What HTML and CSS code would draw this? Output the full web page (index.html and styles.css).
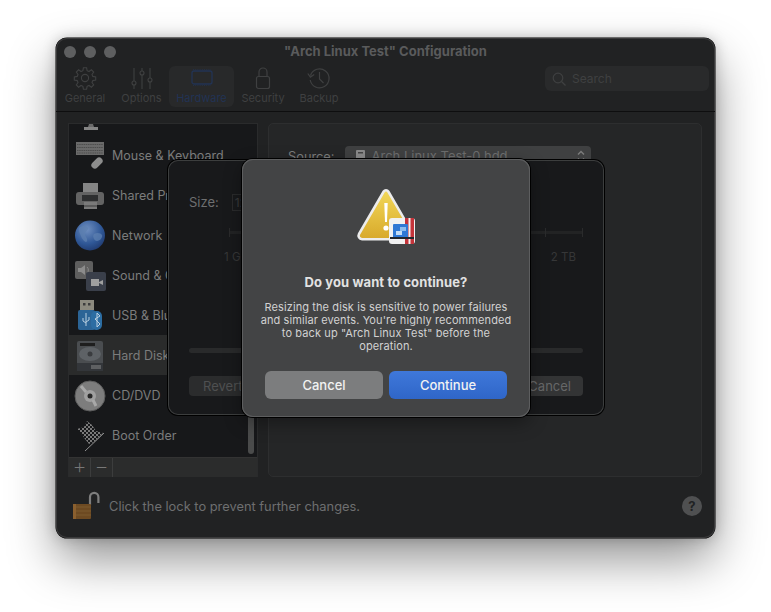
FILE: index.html
```html
<!DOCTYPE html>
<html lang="en">
<head>
<meta charset="utf-8">
<title>Arch Linux Test Configuration</title>
<link rel="stylesheet" href="styles.css">
</head>
<body>
<div class="window">
  <header class="header">
    <div class="titlebar">
      <div class="lights"><i></i><i></i><i></i></div>
      <div class="title">"Arch Linux Test" Configuration</div>
    </div>
    <div class="toolbar">
      <div class="tabs">
        <div class="tab tab-general">
          <svg width="24" height="24" viewBox="0 0 24 24" fill="none" stroke="currentColor" stroke-width="1.1"><circle cx="12" cy="12" r="3.6"/><path d="M10.4 1.8h3.200l.5 2.900 1.900.8 2.400-1.700 2.300 2.300-1.700 2.400.8 1.900 2.900.5v3.200l-2.900.5-.8 1.900 1.700 2.400-2.300 2.300-2.400-1.700-1.900.8-.5 2.900h-3.200l-.5-2.900-1.900-.8-2.400 1.700-2.300-2.300 1.700-2.400-.8-1.900-2.900-.5v-3.200l2.900-.5.8-1.900-1.700-2.400 2.300-2.300 2.400 1.700 1.900-.8z"/></svg>
          <span>General</span>
        </div>
        <div class="tab tab-options">
          <svg width="24" height="24" viewBox="0 0 24 24" fill="none" stroke="currentColor" stroke-width="1.1"><path d="M4 2v13M4 19v4M12 2v3M12 9v14M20 2v10M20 16v7"/><circle cx="4" cy="17" r="2"/><circle cx="12" cy="7" r="2"/><circle cx="20" cy="14" r="2"/></svg>
          <span>Options</span>
        </div>
        <div class="tab tab-hardware">
          <svg width="24" height="24" viewBox="0 0 24 24" fill="none" stroke="currentColor" stroke-width="1.3"><rect x="2" y="5" width="20" height="13" rx="2"/><path stroke-width=".8" stroke-dasharray="1 1.2" d="M3 3.700h18M3 19.400h18"/></svg>
          <span>Hardware</span>
        </div>
        <div class="tab tab-security">
          <svg width="24" height="24" viewBox="0 0 24 24" fill="none" stroke="currentColor" stroke-width="1.2"><rect x="5.500" y="10.500" width="13" height="12" rx="2"/><path d="M8 10.500V6a4 4 0 0 1 8 0v4.500"/></svg>
          <span>Security</span>
        </div>
        <div class="tab tab-backup">
          <svg width="24" height="24" viewBox="0 0 24 24" fill="none" stroke="currentColor" stroke-width="1.2"><path d="M3.500 9.500a9.500 9.500 0 1 1-.3 4.500M.8 7.500l2.600 3.600 3.800-2.500"/><path d="M12.500 6v7l4 4"/></svg>
          <span>Backup</span>
        </div>
      </div>
      <div class="search">
        <svg width="14" height="14" viewBox="0 0 14 14" fill="none" stroke="currentColor" stroke-width="1.2"><circle cx="6" cy="6" r="4.800"/><path d="M9.500 9.500l4 4"/></svg>
        <span>Search</span>
      </div>
    </div>
  </header>

  <main class="content">
    <aside class="sidebar">
      <div class="list">
        <svg class="peek" width="20" height="6" viewBox="0 0 20 6"><path d="M8 0h4l1 3H7z" fill="#6b6b6b"/><rect x="3" y="3" width="14" height="3" fill="#858585"/></svg>
        <div class="row">
          <svg class="ico" width="36" height="34" viewBox="0 0 36 34"><rect x="4" y="4" width="28" height="13" fill="#6a6a6a"/><path d="M5 6.500h26M5 9.500h26M5 12.500h26M5 15h26" stroke="#4d4d4d" stroke-width="1.200" stroke-dasharray="1.500 .7"/><rect x="21.500" y="18.500" width="7" height="13" rx="3.500" transform="rotate(45 25 25)" fill="#8d8d8d"/></svg>
          <span>Mouse &amp; Keyboard</span>
        </div>
        <div class="row">
          <svg class="ico" width="36" height="34" viewBox="0 0 36 34"><rect x="11" y="5" width="15" height="10" fill="#858585"/><rect x="4" y="14" width="28" height="13" rx="3" fill="#636363"/><rect x="10" y="17" width="16" height="6" fill="#2e2f30"/><rect x="12" y="24" width="13" height="7" fill="#7a7a7a"/><path d="M12 28h13" stroke="#3c3c3c"/></svg>
          <span>Shared Printers</span>
        </div>
        <div class="row">
          <svg class="ico" width="36" height="34" viewBox="0 0 36 34"><defs><radialGradient id="globe" cx=".4" cy=".3" r=".8"><stop offset="0" stop-color="#6f8fc0"/><stop offset=".6" stop-color="#2f5796"/><stop offset="1" stop-color="#1d3568"/></radialGradient></defs><circle cx="18" cy="17.500" r="15" fill="url(#globe)"/><path d="M7 10c4-3 8-2 9 0s-3 3-3 6 3 4 2 7-5-2-6-5-3-5-2-8zM22 16c3-2 7-1 8 1s-2 6-5 6-5-5-3-7z" fill="#5d80b0" opacity=".75"/></svg>
          <span>Network</span>
        </div>
        <div class="row">
          <svg class="ico" width="36" height="34" viewBox="0 0 36 34"><rect x="3" y="3" width="18" height="18" rx="2" fill="#5f5f5f"/><path d="M6 10h3l4-3v10l-4-3H6z" fill="#8b8b8b"/><path d="M15 9a4 4 0 0 1 0 6" stroke="#8b8b8b" fill="none"/><rect x="14" y="14" width="20" height="19" rx="2" fill="#3a3f4a"/><path d="M19 21h8v7h-8zM27 24l4-2v5l-4-2z" fill="#a0a0a0"/></svg>
          <span>Sound &amp; Camera</span>
        </div>
        <div class="row">
          <svg class="ico" width="36" height="34" viewBox="0 0 36 34"><rect x="8" y="2" width="14" height="10" fill="#8c8a7f"/><rect x="11" y="5" width="2.500" height="2.500" fill="#3d3d3d"/><rect x="16" y="5" width="2.500" height="2.500" fill="#3d3d3d"/><rect x="6" y="12" width="17" height="20" rx="2" fill="#2b6496"/><rect x="19" y="13" width="11" height="19" rx="5" fill="#2c6da3"/><path d="M14 15v13M11 20v3l3 2M17 19v3l-3 2M25 17v12l3-3-5-5 5-3-3-3z" stroke="#b9cfe0" stroke-width="1" fill="none"/></svg>
          <span>USB &amp; Bluetooth</span>
        </div>
        <div class="row selected">
          <svg class="ico" width="36" height="34" viewBox="0 0 36 34"><rect x="5" y="3" width="26" height="30" rx="2" fill="#4a4d50"/><rect x="8" y="5" width="15" height="3" fill="#1e1e1e"/><ellipse cx="18" cy="16" rx="11" ry="7" fill="#5e6266"/><circle cx="18" cy="16" r="2.500" fill="#3a3c3f"/><rect x="5" y="25" width="26" height="8" fill="#33363a"/><path d="M20 31v-4M22 31v-4M24 31v-4M26 31v-4M28 31v-4" stroke="#8a8a8a"/></svg>
          <span>Hard Disk</span>
        </div>
        <div class="row">
          <svg class="ico" width="36" height="34" viewBox="0 0 36 34"><circle cx="18" cy="18" r="15" fill="#7d7d7d"/><circle cx="18" cy="18" r="15" fill="none" stroke="#5c5c5c"/><circle cx="18" cy="18" r="6" fill="#a0a0a0"/><circle cx="18" cy="18" r="2.500" fill="#262626"/><path d="M9 8l5 6M24 28l-3-6" stroke="#a8a8a8" stroke-width="3"/></svg>
          <span>CD/DVD</span>
        </div>
        <div class="row">
          <svg class="ico" width="36" height="34" viewBox="0 0 36 34"><defs><pattern id="chk" width="4" height="4" patternUnits="userSpaceOnUse"><rect width="2" height="2" fill="#7a7a7a"/><rect x="2" y="2" width="2" height="2" fill="#7a7a7a"/></pattern></defs><path d="M5 11l7-2 3-6 5 4 4 6 7 2-9 9-5 2-4-5-4-6z" fill="url(#chk)"/><path d="M13 33l19-18" stroke="#8f8f8f"/></svg>
          <span>Boot Order</span>
        </div>
        <div class="scroller"></div>
      </div>
      <div class="addbar">
        <div class="addbtn">+</div>
        <div class="addbtn">−</div>
      </div>
    </aside>

    <section class="panel">
      <div class="source">
        <span class="source-label">Source:</span>
        <div class="select">
          <svg width="11" height="13" viewBox="0 0 11 13"><rect x="1" y="0" width="9" height="13" rx="1" fill="#8a8a8a"/><rect x="3" y="2" width="5" height="1.500" fill="#444"/></svg>
          <span>Arch Linux Test-0.hdd</span>
          <svg class="updown" width="10" height="13" viewBox="0 0 10 13" fill="none" stroke="#7c7c7c" stroke-width="1.400"><path d="M2 4.500l3-3 3 3M2 8.500l3 3 3-3"/></svg>
        </div>
      </div>
    </section>
  </main>

  <footer class="footer">
    <svg width="28" height="30" viewBox="0 0 28 30"><path d="M18 14V6a4.200 4.200 0 0 1 8.400 0v6" fill="none" stroke="#7e7e7e" stroke-width="2.200"/><rect x="1" y="13" width="18" height="15" rx="1" fill="#6d4a22"/><path d="M1 16h18M1 20h18M1 24h18" stroke="#7d5a2e" stroke-width="1"/><rect x="1" y="13" width="3" height="15" fill="#8a5f2e"/></svg>
    <span>Click the lock to prevent further changes.</span>
    <div class="help">?</div>
  </footer>

  <div class="sheet">
    <div class="size-row"><span class="size-label">Size:</span><span class="size-box">12</span></div>
    <div class="slider"><i></i><i></i><i></i></div>
    <div class="ticks"><span>1 GB</span><span>2 TB</span></div>
    <div class="progress"></div>
    <div class="sheet-buttons"><div class="ghost">Revert</div><div class="ghost">Cancel</div></div>
  </div>

  <div class="alert">
    <svg class="alert-icon" width="60" height="58" viewBox="0 0 60 58">
      <defs><linearGradient id="warn" x1="0" y1="0" x2="0" y2="1"><stop offset="0" stop-color="#f2d85a"/><stop offset="1" stop-color="#d8a92a"/></linearGradient></defs>
      <path d="M27.700 4.500 3 47a3.500 3.500 0 0 0 3 5.200h48a3.500 3.500 0 0 0 3-5.200L32.300 4.500a2.700 2.700 0 0 0-4.600 0z" fill="url(#warn)" stroke="#ececec" stroke-width="2.500" stroke-linejoin="round"/>
      <path d="M28.300 16h3.400l-.7 19h-2z" fill="#fff"/><circle cx="30" cy="41" r="2.600" fill="#fff"/>
      <rect x="33" y="31" width="26" height="26" rx="3" fill="#f1f1f1"/>
      <rect x="49" y="31" width="9" height="26" fill="#c4343a"/><rect x="52.500" y="31" width="2" height="26" fill="#f1f1f1"/>
      <rect x="37" y="37" width="15" height="14" rx="1" fill="#2f78d4"/>
      <rect x="40" y="44" width="6" height="4" fill="#c4ddf5"/><rect x="44" y="40" width="6" height="4" fill="#8cbcec"/>
      <rect x="34" y="50" width="24" height="2" fill="#23262b"/>
    </svg>
    <h1>Do you want to continue?</h1>
    <p>Resizing the disk is sensitive to power failures and similar events. You're highly recommended to back up "Arch Linux Test" before the operation.</p>
    <div class="alert-buttons">
      <button class="btn btn-cancel">Cancel</button>
      <button class="btn btn-primary">Continue</button>
    </div>
  </div>
</div>
</body>
</html>
```
FILE: styles.css
```css
* { box-sizing: border-box; }
html, body { margin: 0; height: 100%; }
body {
  width: 771px;
  height: 612px;
  background: #fff;
  overflow: hidden;
  padding: 38px 0 0 56px;
  font-family: Inter, "Liberation Sans", sans-serif;
}
.window {
  position: relative;
  width: 659px;
  height: 500px;
  display: flex;
  flex-direction: column;
  background: #212223;
  border-radius: 11px;
  box-shadow: 0 0 0 .5px #000, inset 0 0 0 1px #3a3a3b, 0 22px 48px rgba(0,0,0,.42), 0 0 14px rgba(0,0,0,.22);
}
.header {
  height: 74px;
  flex: none;
  border-bottom: 1px solid #0e0e0f;
  display: flex;
  flex-direction: column;
}
.titlebar {
  position: relative;
  height: 26px;
  flex: none;
  margin-bottom: 2px;
  display: flex;
  align-items: center;
  justify-content: center;
}
.lights {
  position: absolute;
  left: 8px;
  top: 8px;
  display: flex;
  gap: 8px;
}
.lights i {
  width: 12px;
  height: 12px;
  border-radius: 50%;
  background: #5e5f60;
}
.title {
  font-size: 13px;
  font-weight: 700;
  color: #5a5b5c;
}
.toolbar {
  flex: 1;
  display: flex;
  justify-content: space-between;
  padding-left: 4px;
  padding-right: 6px;
}
.tabs { display: flex; }
.tab {
  height: 41px;
  display: flex;
  flex-direction: column;
  align-items: center;
  justify-content: flex-start;
  gap: 1px;
  color: #3f4041;
  font-size: 11px;
  border-radius: 6px;
}
.tab svg { flex: none; }
.tab span { line-height: 14px; }
.tab-general { width: 50px; }
.tab-options { width: 55px; margin-left: 4px; }
.tab-hardware { width: 65px; background: #28292a; color: #223354; }
.tab-security { width: 50px; margin-left: 4px; }
.tab-backup { width: 52px; margin-left: 5px; }
.search {
  width: 164px;
  height: 25px;
  background: #292a2b;
  border-radius: 6px;
  display: flex;
  align-items: center;
  gap: 6px;
  padding-left: 7px;
  font-size: 12px;
  color: #3f4041;
}
.content {
  flex: 1;
  display: flex;
  gap: 10px;
  padding: 11px 13px 0 12px;
  min-height: 0;
}
.sidebar {
  width: 190px;
  height: 354px;
  flex: none;
  display: flex;
  flex-direction: column;
  background: #17181a;
  border: 1px solid #2a2b2c;
  border-bottom: 0;
}
.list {
  position: relative;
  flex: 1;
  overflow: hidden;
}
.peek { position: absolute; left: 12px; top: 0; }
.row {
  height: 40px;
  display: flex;
  align-items: center;
  gap: 4px;
  padding-left: 3px;
  font-size: 12.500px;
  color: #7b7c7c;
  white-space: nowrap;
}
.row:first-of-type { margin-top: 11px; }
.row.selected { background: #2a2b2b; }
.ico { flex: none; }
.scroller {
  position: absolute;
  right: 3px;
  bottom: 3px;
  width: 6px;
  height: 60px;
  border-radius: 3px;
  background: #4a4b4b;
}
.addbar {
  height: 20px;
  flex: none;
  display: flex;
  background: #2b2c2c;
  border-top: 1px solid #333;
}
.addbtn {
  width: 22px;
  border-right: 1px solid #3c3d3d;
  text-align: center;
  font-size: 22px;
  line-height: 17px;
  font-weight: 200;
  color: #787878;
}
.panel {
  flex: 1;
  height: 354px;
  background: #252627;
  border: 1px solid #2d2e2f;
  border-radius: 5px;
  padding: 22px 0 0 19px;
}
.source { display: flex; align-items: center; gap: 10px; }
.source-label { font-size: 12.800px; color: #7b7c7c; }
.select {
  width: 246px;
  height: 20px;
  background: #3f4041;
  border-radius: 4px;
  display: flex;
  align-items: center;
  gap: 6px;
  padding: 0 5px 0 10px;
  font-size: 13px;
  color: #6d6e6e;
}
.updown { margin-left: auto; }
.footer {
  height: 61px;
  flex: none;
  display: flex;
  align-items: center;
  padding: 0 13px 3px 16px;
  gap: 9px;
  font-size: 12.850px;
  color: #6e6f70;
}
.help {
  margin-left: auto;
  width: 20px;
  height: 20px;
  border-radius: 50%;
  background: #4f5051;
  color: #212223;
  font-weight: 700;
  font-size: 13px;
  text-align: center;
  line-height: 20px;
}
.sheet {
  position: absolute;
  left: 112px;
  top: 122px;
  width: 436px;
  height: 255px;
  background: #18191b;
  border-radius: 10px;
  box-shadow: 0 0 0 1px #000, inset 0 0 0 1px #55565799;
  padding: 33px 21px 0 21px;
  display: flex;
  flex-direction: column;
  color: #6e6f70;
  font-size: 13px;
}
.size-row { display: flex; align-items: center; gap: 13px; height: 18px; }
.size-box { border: 1px solid #2a2b2c; color: #3a3b3c; padding: 0 2px; font-size: 12px; }
.slider {
  margin-top: 20px;
  margin-left: 40px;
  height: 3px;
  display: flex;
  justify-content: flex-end;
  gap: 36px;
  background: #222324;
}
.slider i { width: 1px; height: 9px; margin-top: -3px; background: #2a2b2c; }
.slider i:first-child { margin-right: auto; }
.ticks {
  margin-top: 16px;
  margin-left: 35px;
  padding-right: 7px;
  display: flex;
  justify-content: space-between;
  font-size: 11.500px;
  color: #363738;
}
.progress {
  margin-top: 84px;
  height: 5px;
  border-radius: 3px;
  background: #292a2b;
}
.sheet-buttons {
  margin-top: 23px;
  display: flex;
  justify-content: space-between;
}
.ghost {
  width: 120px;
  height: 20px;
  line-height: 20px;
  border-radius: 4px;
  background: #2b2c2d;
  color: #4f5051;
  padding-left: 14px;
  font-size: 13px;
}
.ghost:last-child { text-align: right; padding: 0 12px 0 0; color: #666768; background: #333435; }
.alert {
  position: absolute;
  left: 186px;
  top: 121px;
  width: 288px;
  height: 258px;
  background: #434445;
  border-radius: 11px;
  box-shadow: 0 0 0 1px #000, inset 0 0 0 1px #5d5e5f, 0 6px 18px rgba(0,0,0,.35);
  display: flex;
  flex-direction: column;
  align-items: center;
  padding-top: 28px;
  color: #dcdcdc;
}
.alert-icon { flex: none; }
.alert h1 {
  margin: 29px 0 0;
  font-size: 13px;
  letter-spacing: .1px;
  line-height: 16px;
  font-weight: 700;
  color: #e2e2e2;
}
.alert p {
  margin: 11px 0 0;
  width: 252px;
  font-size: 11px;
  letter-spacing: .1px;
  line-height: 13px;
  text-align: center;
  color: #d2d2d2;
}
.alert-buttons {
  margin-top: 18px;
  display: flex;
  gap: 6px;
}
.btn {
  width: 118px;
  height: 28px;
  border: 0;
  border-radius: 6px;
  font: 500 13px Inter, "Liberation Sans", sans-serif;
  color: #f2f2f2;
}
.btn-cancel { background: #7c7d7e; }
.btn-primary { background: linear-gradient(#3f78da, #2f66c8); }
```
